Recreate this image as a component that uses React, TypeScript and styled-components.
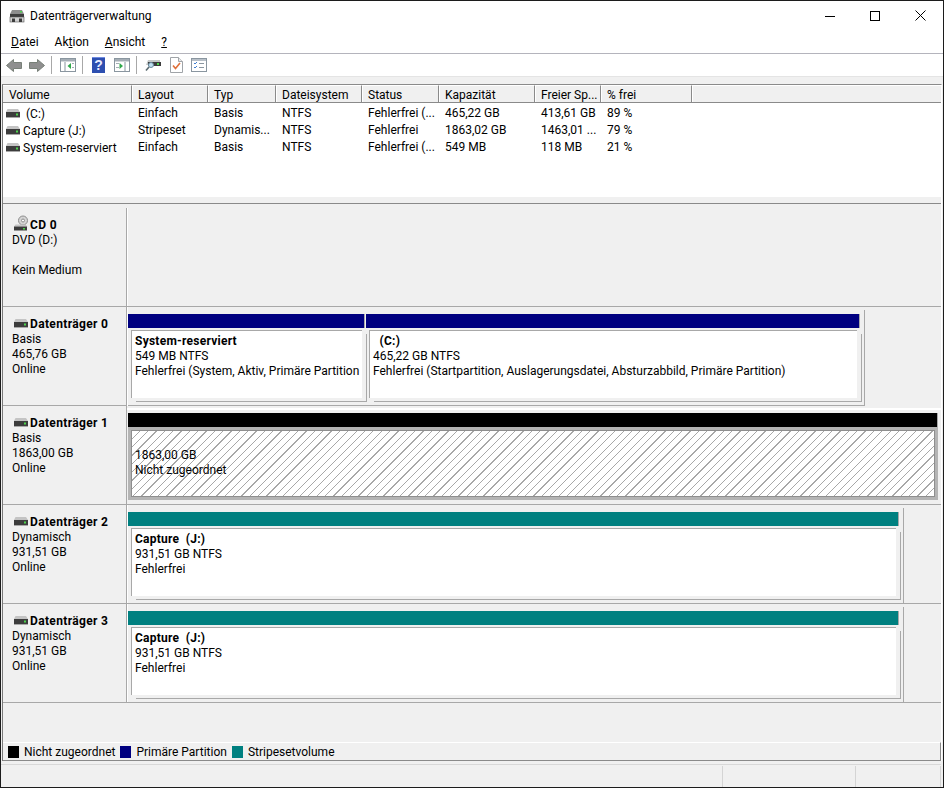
import React from "react";
import styled, { createGlobalStyle } from "styled-components";

const Global = createGlobalStyle`
  html, body { margin: 0; padding: 0; background: #f0f0f0; }
  * { box-sizing: border-box; }
  #root { width: 944px; height: 788px; }
`;

const Win = styled.div`
  width: 944px; height: 788px; display: flex; flex-direction: column;
  border: 1px solid #1c1c1c; background: #f0f0f0; overflow: hidden;
  font: 12px/15px Roboto, "Noto Sans", sans-serif; color: #000;
`;
const TitleBar = styled.div`
  height: 29px; flex: none; background: #fff; display: flex; align-items: center; padding-left: 8px;
`;
const TitleText = styled.span`flex: 1; color: #000; padding: 2px 0 0 5px;`;
const WinBtn = styled.div`width: 45px; height: 29px; display: flex; align-items: center; justify-content: center; &:last-child { width: 46px; }`;
const MenuBar = styled.div`
  height: 24px; flex: none; background: #fff; border-bottom: 1px solid #b4b4bc; display: flex; align-items: center; padding: 1px 0 0 10px; gap: 16px;
`;
const MenuItem = styled.span`u { text-decoration: underline; }`;
const Toolbar = styled.div`
  height: 23px; flex: none; background: #fff; display: flex; align-items: center; padding-left: 5px; border-bottom: 1px solid #e4e4e4;
`;
const ToolSep = styled.div<{ $mr: number }>`width: 1px; height: 18px; background: #a8a8a8; margin-right: ${p => p.$mr}px;`;
const ToolIcon = styled.svg<{ $mr: number }>`display: block; flex: none; margin-right: ${p => p.$mr}px;`;
const Strip = styled.div`height: 7px; flex: none; background: #f0f0f0;`;
const Content = styled.div`flex: 1; display: flex; flex-direction: column; margin: 0 1px; min-height: 0; border-top: 1px solid #8a8a8a; border-left: 1px solid #7a7a7a; border-right: 1px solid #fff;`;
const Header = styled.div`display: flex; height: 18px; flex: none; background: #f0f0f0; border-bottom: 1px solid #8a8a8a;`;
const HeaderCell = styled.div<{ $w: number }>`
  width: ${p => p.$w}px; flex: none; height: 17px; padding: 1px 0 0 5px; line-height: 16px;
  border-right: 1px solid #8a8a8a; border-left: 1px solid #fff; border-top: 1px solid #fff; white-space: nowrap; overflow: hidden;
  &:first-child { border-left: 0; padding-left: 6px; }
`;
const HeaderFill = styled.div`flex: 1; height: 17px; border-top: 1px solid #fff; border-left: 1px solid #fff;`;
const List = styled.div`height: 94px; flex: none; background: #fff; padding-top: 2px;`;
const Row = styled.div`display: flex; height: 17px; line-height: 16px;`;
const Cell = styled.div<{ $w: number }>`width: ${p => p.$w}px; flex: none; padding-left: 6px; white-space: nowrap; overflow: hidden;`;
const VolCell = styled.div<{ $w: number }>`width: ${p => p.$w}px; flex: none; padding-left: 3px; display: flex; align-items: center; gap: 3px; white-space: nowrap;`;
const ListStrip = styled.div`height: 7px; flex: none; background: #f0f0f0; border-bottom: 1px solid #8a8a8a;`;
const Graph = styled.div`flex: 1; min-height: 0; display: flex; flex-direction: column; background: #f0f0f0; padding-top: 4px;`;
const DiskRow = styled.div`height: 99px; flex: none; display: flex;`;
const DiskLabel = styled.div`
  width: 124px; flex: none; padding: 9px 0 0 9px; border-right: 1px solid #a8a8a8; border-bottom: 1px solid #a8a8a8; box-shadow: 1px 0 0 #fff;
`;
const DiskName = styled.div`font-weight: 700; letter-spacing: 0.35px; display: flex; align-items: center; gap: 2px; height: 16px; margin-left: 2px; white-space: nowrap;`;
const DiskArea = styled.div<{ $noLine?: boolean; $band?: boolean }>`
  flex: 1; min-width: 0; padding: 3px 0 0 1px; display: flex; align-items: flex-start;
  border-bottom: 1px solid ${p => (p.$noLine ? "transparent" : "#a8a8a8")};
  ${p => (p.$band ? "background: linear-gradient(#f0f0f0 2px, #fff 2px, #fff 4px, #f0f0f0 4px);" : "")}
`;
const DiskFrame = styled.div<{ $w: number; $plain?: boolean }>`
  width: ${p => p.$w}px; height: 96px; display: flex; padding: 4px ${p => (p.$plain ? 0 : 5)}px 4px 0; gap: 2px; flex: none;
  border-right: 1px solid ${p => (p.$plain ? "transparent" : "#a8a8a8")}; border-bottom: 1px solid ${p => (p.$plain ? "transparent" : "#a8a8a8")};
`;
const Partition = styled.div<{ $w?: number }>`
  ${p => (p.$w ? `width: ${p.$w}px; flex: none;` : "flex: 1;")} display: flex; flex-direction: column; min-width: 0;
`;
const Bar = styled.div<{ $c: string }>`height: 14px; flex: none; background: ${p => p.$c}; box-shadow: 1px 0 0 #a8a8a8;`;
const Body = styled.div`
  flex: 1; margin: 2px 2px 3px 3px; padding: 3px 0 0 3px; background: #fff; border-top: 1px solid #a8a8a8; border-left: 1px solid #a8a8a8;
  white-space: nowrap; overflow: hidden; box-shadow: 4px 3px 0 #f0f0f0, 5px 4px 0 #a8a8a8; min-width: 0;
`;
const Hatch = styled.div`
  flex: 1; border: 3px solid #b4b4b4; margin-right: -1px;
`;
const HatchInner = styled.div`
  height: 100%; border: 1px solid #8e8e8e; padding: 17px 0 0 3px;
  background: repeating-linear-gradient(135deg, #fff 0 5px, #a8a8a8 5px 5.9px);
`;
const Strong = styled.div`font-weight: 700; letter-spacing: 0.25px;`;
const EmptyPane = styled.div`flex: 1; border-bottom: 1px solid #a8a8a8;`;
const Spacer = styled.div`flex: 1;`;
const Legend = styled.div`
  height: 19px; flex: none; display: flex; align-items: center; padding: 1px 0 0 5px; gap: 5px; border-top: 1px solid #fff; border-right: 1px solid #8a8a8a; border-bottom: 1px solid #8a8a8a;
`;
const Swatch = styled.span<{ $c: string }>`width: 11px; height: 12px; background: ${p => p.$c}; flex: none; display: inline-block;`;
const LegendItem = styled.span`white-space: nowrap;`;
const Status = styled.div`height: 23px; flex: none; border-top: 1px solid #d8d8d8; margin: 3px 2px 0 0; padding-top: 1px; display: flex; justify-content: flex-end;`;
const StatusCell = styled.div<{ $w: number }>`width: ${p => p.$w}px; flex: none; height: 21px; border-left: 1px solid #d4d4d4;`;
const DriveSvg = styled.svg`display: block; flex: none; margin-top: -2px;`;
const VolDriveSvg = styled(DriveSvg)`margin-top: 0;`;
const CdSvg = styled.svg`display: block; flex: none; margin-top: -3px;`;
const AppSvg = styled.svg`display: block; flex: none; margin-top: 1px;`;

const DriveShape = () => (
  <>
    <path d="M1.500 0h10.500l2 3H0z" fill="#c4c4c4" />
    <rect x="0" y="3" width="14" height="5" fill="#3c3c3c" />
    <rect x="10" y="4.500" width="2" height="2" fill="#4cd44c" />
    <rect x="0" y="8" width="14" height="1" fill="#a8a8a8" />
  </>
);
const Drive = () => <DriveSvg width="14" height="9" viewBox="0 0 14 9"><DriveShape /></DriveSvg>;
const VolDrive = () => <VolDriveSvg width="14" height="9" viewBox="0 0 14 9"><DriveShape /></VolDriveSvg>;
const Cd = () => (
  <CdSvg width="14" height="17" viewBox="0 0 14 17">
    <circle cx="9" cy="5.500" r="4.500" fill="#d4d4d4" stroke="#8c8c8c" />
    <circle cx="9" cy="5.500" r="1.500" fill="#fff" stroke="#8c8c8c" />
    <path d="M1.500 9.500h10l2 2H0z" fill="#c4c4c4" />
    <rect x="0" y="11.500" width="13" height="4" fill="#3c3c3c" />
    <rect x="9" y="13" width="2" height="1.500" fill="#4cd44c" />
  </CdSvg>
);
const Arrow = ({ right, mr }: { right?: boolean; mr: number }) => (
  <ToolIcon $mr={mr} width="16" height="15" viewBox="0 0 16 15">
    <path d={right ? "M8.500 1.500l7 6-7 6v-3H.5v-6h8z" : "M7.500 1.500l-7 6 7 6v-3h8v-6h-8z"} fill="#8f8f8f" stroke="#788078" />
  </ToolIcon>
);
const WinIcon = ({ flip, mr }: { flip?: boolean; mr: number }) => (
  <ToolIcon $mr={mr} width="16" height="14" viewBox="0 0 16 14">
    <rect x="0.500" y="0.500" width="15" height="13" fill="#fff" stroke="#8a96a0" />
    <rect x="1" y="1" width="14" height="2.500" fill="#a4adb5" />
    {flip ? (
      <>
        <rect x="10.500" y="4" width="1" height="9" fill="#8a96a0" />
        <rect x="2" y="5" width="3" height="1" fill="#a4adb5" /><rect x="2" y="9" width="3" height="1" fill="#a4adb5" />
        <path d="M5.500 5v6l3.500-3z" fill="#2fa84a" />
      </>
    ) : (
      <>
        <rect x="4.500" y="4" width="1" height="9" fill="#8a96a0" />
        <rect x="12" y="5" width="2" height="1" fill="#a4adb5" /><rect x="12" y="9" width="2" height="1" fill="#a4adb5" />
        <path d="M11 5v6l-3.500-3z" fill="#2fa84a" />
      </>
    )}
  </ToolIcon>
);
const Help = ({ mr }: { mr: number }) => (
  <ToolIcon $mr={mr} width="13" height="16" viewBox="0 0 13 16">
    <rect width="13" height="16" fill="#2d4fb0" />
    <rect x="0" y="0" width="13" height="1" fill="#6f8ae0" />
    <text x="6.500" y="13" textAnchor="middle" fontFamily="Liberation Sans" fontSize="14" fontWeight="700" fill="#e8ecff">?</text>
  </ToolIcon>
);
const DriveSearch = ({ mr }: { mr: number }) => (
  <ToolIcon $mr={mr} width="16" height="14" viewBox="0 0 16 14">
    <path d="M3 2h12v5H1z" fill="#c4c8c8" />
    <rect x="3" y="4" width="13" height="4" fill="#3c3c3c" />
    <rect x="12" y="5" width="2" height="2" fill="#4cd44c" />
    <circle cx="6" cy="7" r="2.500" fill="#bfe0f0" stroke="#6b8aa0" />
    <path d="M4 9 1 12.500" stroke="#5a6a70" strokeWidth="1.600" />
  </ToolIcon>
);
const DocCheck = ({ mr }: { mr: number }) => (
  <ToolIcon $mr={mr} width="13" height="16" viewBox="0 0 13 16">
    <path d="M.5.5h8l4 4v11H.5z" fill="#fff" stroke="#a0a4a8" />
    <path d="M8.500.5v4h4" fill="#e8e8e8" stroke="#a0a4a8" />
    <path d="M3 8.500l2.500 3L10 6" fill="none" stroke="#e0703a" strokeWidth="1.600" />
  </ToolIcon>
);
const CheckList = ({ mr }: { mr: number }) => (
  <ToolIcon $mr={mr} width="16" height="14" viewBox="0 0 16 14">
    <rect x=".5" y=".5" width="15" height="13" fill="#fff" stroke="#8a96a0" />
    <rect x="1" y="1" width="14" height="2" fill="#b8c0c8" />
    <path d="M3 5l1 1 2-2M3 9l1 1 2-2" fill="none" stroke="#3f7fd0" />
    <rect x="8" y="5" width="5" height="1" fill="#8a96a0" /><rect x="8" y="9" width="5" height="1" fill="#8a96a0" />
  </ToolIcon>
);
const AppIcon = () => (
  <AppSvg width="16" height="16" viewBox="0 0 16 16">
    <path d="M3 2h10l2 4H1z" fill="#8c8c8c" />
    <rect x="1" y="6" width="14" height="3" fill="#3c3c3c" />
    <rect x="11" y="3" width="2" height="1.500" fill="#4cd44c" />
    <rect x="1" y="9" width="14" height="5" fill="#d0d0d0" stroke="#555" strokeWidth=".6" />
    <rect x="3" y="10.500" width="3" height="3.500" fill="#3c3c3c" /><rect x="10" y="10.500" width="3" height="3.500" fill="#3c3c3c" />
  </AppSvg>
);

const widths = [129, 76, 68, 86, 77, 96, 66, 91];
const head = ["Volume", "Layout", "Typ", "Dateisystem", "Status", "Kapazität", "Freier Sp...", "% frei"];
const rows = [
  ["\u00a0(C:)", "Einfach", "Basis", "NTFS", "Fehlerfrei (...", "465,22 GB", "413,61 GB", "89 %"],
  ["Capture (J:)", "Stripeset", "Dynamis...", "NTFS", "Fehlerfrei", "1863,02 GB", "1463,01 ...", "79 %"],
  ["System-reserviert", "Einfach", "Basis", "NTFS", "Fehlerfrei (...", "549 MB", "118 MB", "21 %"],
];

const Label = ({ name, lines, cd }: { name: string; lines: string[]; cd?: boolean }) => (
  <DiskLabel>
    <DiskName>{cd ? <Cd /> : <Drive />}{name}</DiskName>
    {lines.map((l, i) => <div key={i}>{l}</div>)}
  </DiskLabel>
);

export default function App() {
  return (
    <Win>
      <Global />
      <TitleBar>
        <AppIcon />
        <TitleText>Datenträgerverwaltung</TitleText>
        <WinBtn><svg width="10" height="10" viewBox="0 0 10 10"><path d="M0 5.500h10" stroke="#000" /></svg></WinBtn>
        <WinBtn><svg width="10" height="10" viewBox="0 0 10 10"><rect x=".5" y=".5" width="9" height="9" fill="none" stroke="#000" /></svg></WinBtn>
        <WinBtn><svg width="11" height="11" viewBox="0 0 11 11"><path d="M.5.5l10 10M10.500.5l-10 10" stroke="#000" /></svg></WinBtn>
      </TitleBar>
      <MenuBar>
        <MenuItem><u>D</u>atei</MenuItem>
        <MenuItem>Ak<u>t</u>ion</MenuItem>
        <MenuItem><u>A</u>nsicht</MenuItem>
        <MenuItem><u>?</u></MenuItem>
      </MenuBar>
      <Toolbar>
        <Arrow mr={7} /><Arrow right mr={6} />
        <ToolSep $mr={8} />
        <WinIcon mr={6} />
        <ToolSep $mr={9} />
        <Help mr={9} /><WinIcon flip mr={6} />
        <ToolSep $mr={8} />
        <DriveSearch mr={9} /><DocCheck mr={8} /><CheckList mr={0} />
      </Toolbar>
      <Strip />
      <Content>
        <Header>
          {head.map((h, i) => <HeaderCell key={h} $w={widths[i]}>{h}</HeaderCell>)}
          <HeaderFill />
        </Header>
        <List>
          {rows.map(r => (
            <Row key={r[0]}>
              <VolCell $w={widths[0]}><VolDrive />{r[0]}</VolCell>
              {r.slice(1).map((c, i) => <Cell key={i} $w={widths[i + 1]}>{c}</Cell>)}
            </Row>
          ))}
        </List>
        <ListStrip />
        <Graph>
          <DiskRow>
            <Label name="CD 0" lines={["DVD (D:)", "\u00a0", "Kein Medium"]} cd />
            <EmptyPane />
          </DiskRow>
          <DiskRow>
            <Label name="Datenträger 0" lines={["Basis", "465,76 GB", "Online"]} />
            <DiskArea $noLine>
              <DiskFrame $w={737}>
                <Partition $w={236}>
                  <Bar $c="#000080" />
                  <Body><Strong>System-reserviert</Strong>549 MB NTFS<br />Fehlerfrei (System, Aktiv, Primäre Partition</Body>
                </Partition>
                <Partition>
                  <Bar $c="#000080" />
                  <Body><Strong>&nbsp;&nbsp;(C:)</Strong>465,22 GB NTFS<br />Fehlerfrei (Startpartition, Auslagerungsdatei, Absturzabbild, Primäre Partition)</Body>
                </Partition>
              </DiskFrame>
            </DiskArea>
          </DiskRow>
          <DiskRow>
            <Label name="Datenträger 1" lines={["Basis", "1863,00 GB", "Online"]} />
            <DiskArea $band>
              <DiskFrame $w={810} $plain>
                <Partition>
                  <Bar $c="#000" />
                  <Hatch><HatchInner>1863,00 GB<br />Nicht zugeordnet</HatchInner></Hatch>
                </Partition>
              </DiskFrame>
            </DiskArea>
          </DiskRow>
          {["Datenträger 2", "Datenträger 3"].map(n => (
            <DiskRow key={n}>
              <Label name={n} lines={["Dynamisch", "931,51 GB", "Online"]} />
              <DiskArea>
                <DiskFrame $w={776}>
                  <Partition>
                    <Bar $c="#008080" />
                    <Body><Strong>Capture&nbsp;&nbsp;(J:)</Strong>931,51 GB NTFS<br />Fehlerfrei</Body>
                  </Partition>
                </DiskFrame>
              </DiskArea>
            </DiskRow>
          ))}
          <Spacer />
          <Legend>
            <Swatch $c="#000" /><LegendItem>Nicht zugeordnet</LegendItem>
            <Swatch $c="#000080" /><LegendItem>Primäre Partition</LegendItem>
            <Swatch $c="#008080" /><LegendItem>Stripesetvolume</LegendItem>
          </Legend>
        </Graph>
      </Content>
      <Status>
        <StatusCell $w={133} /><StatusCell $w={85} /><StatusCell $w={1} />
      </Status>
    </Win>
  );
}
